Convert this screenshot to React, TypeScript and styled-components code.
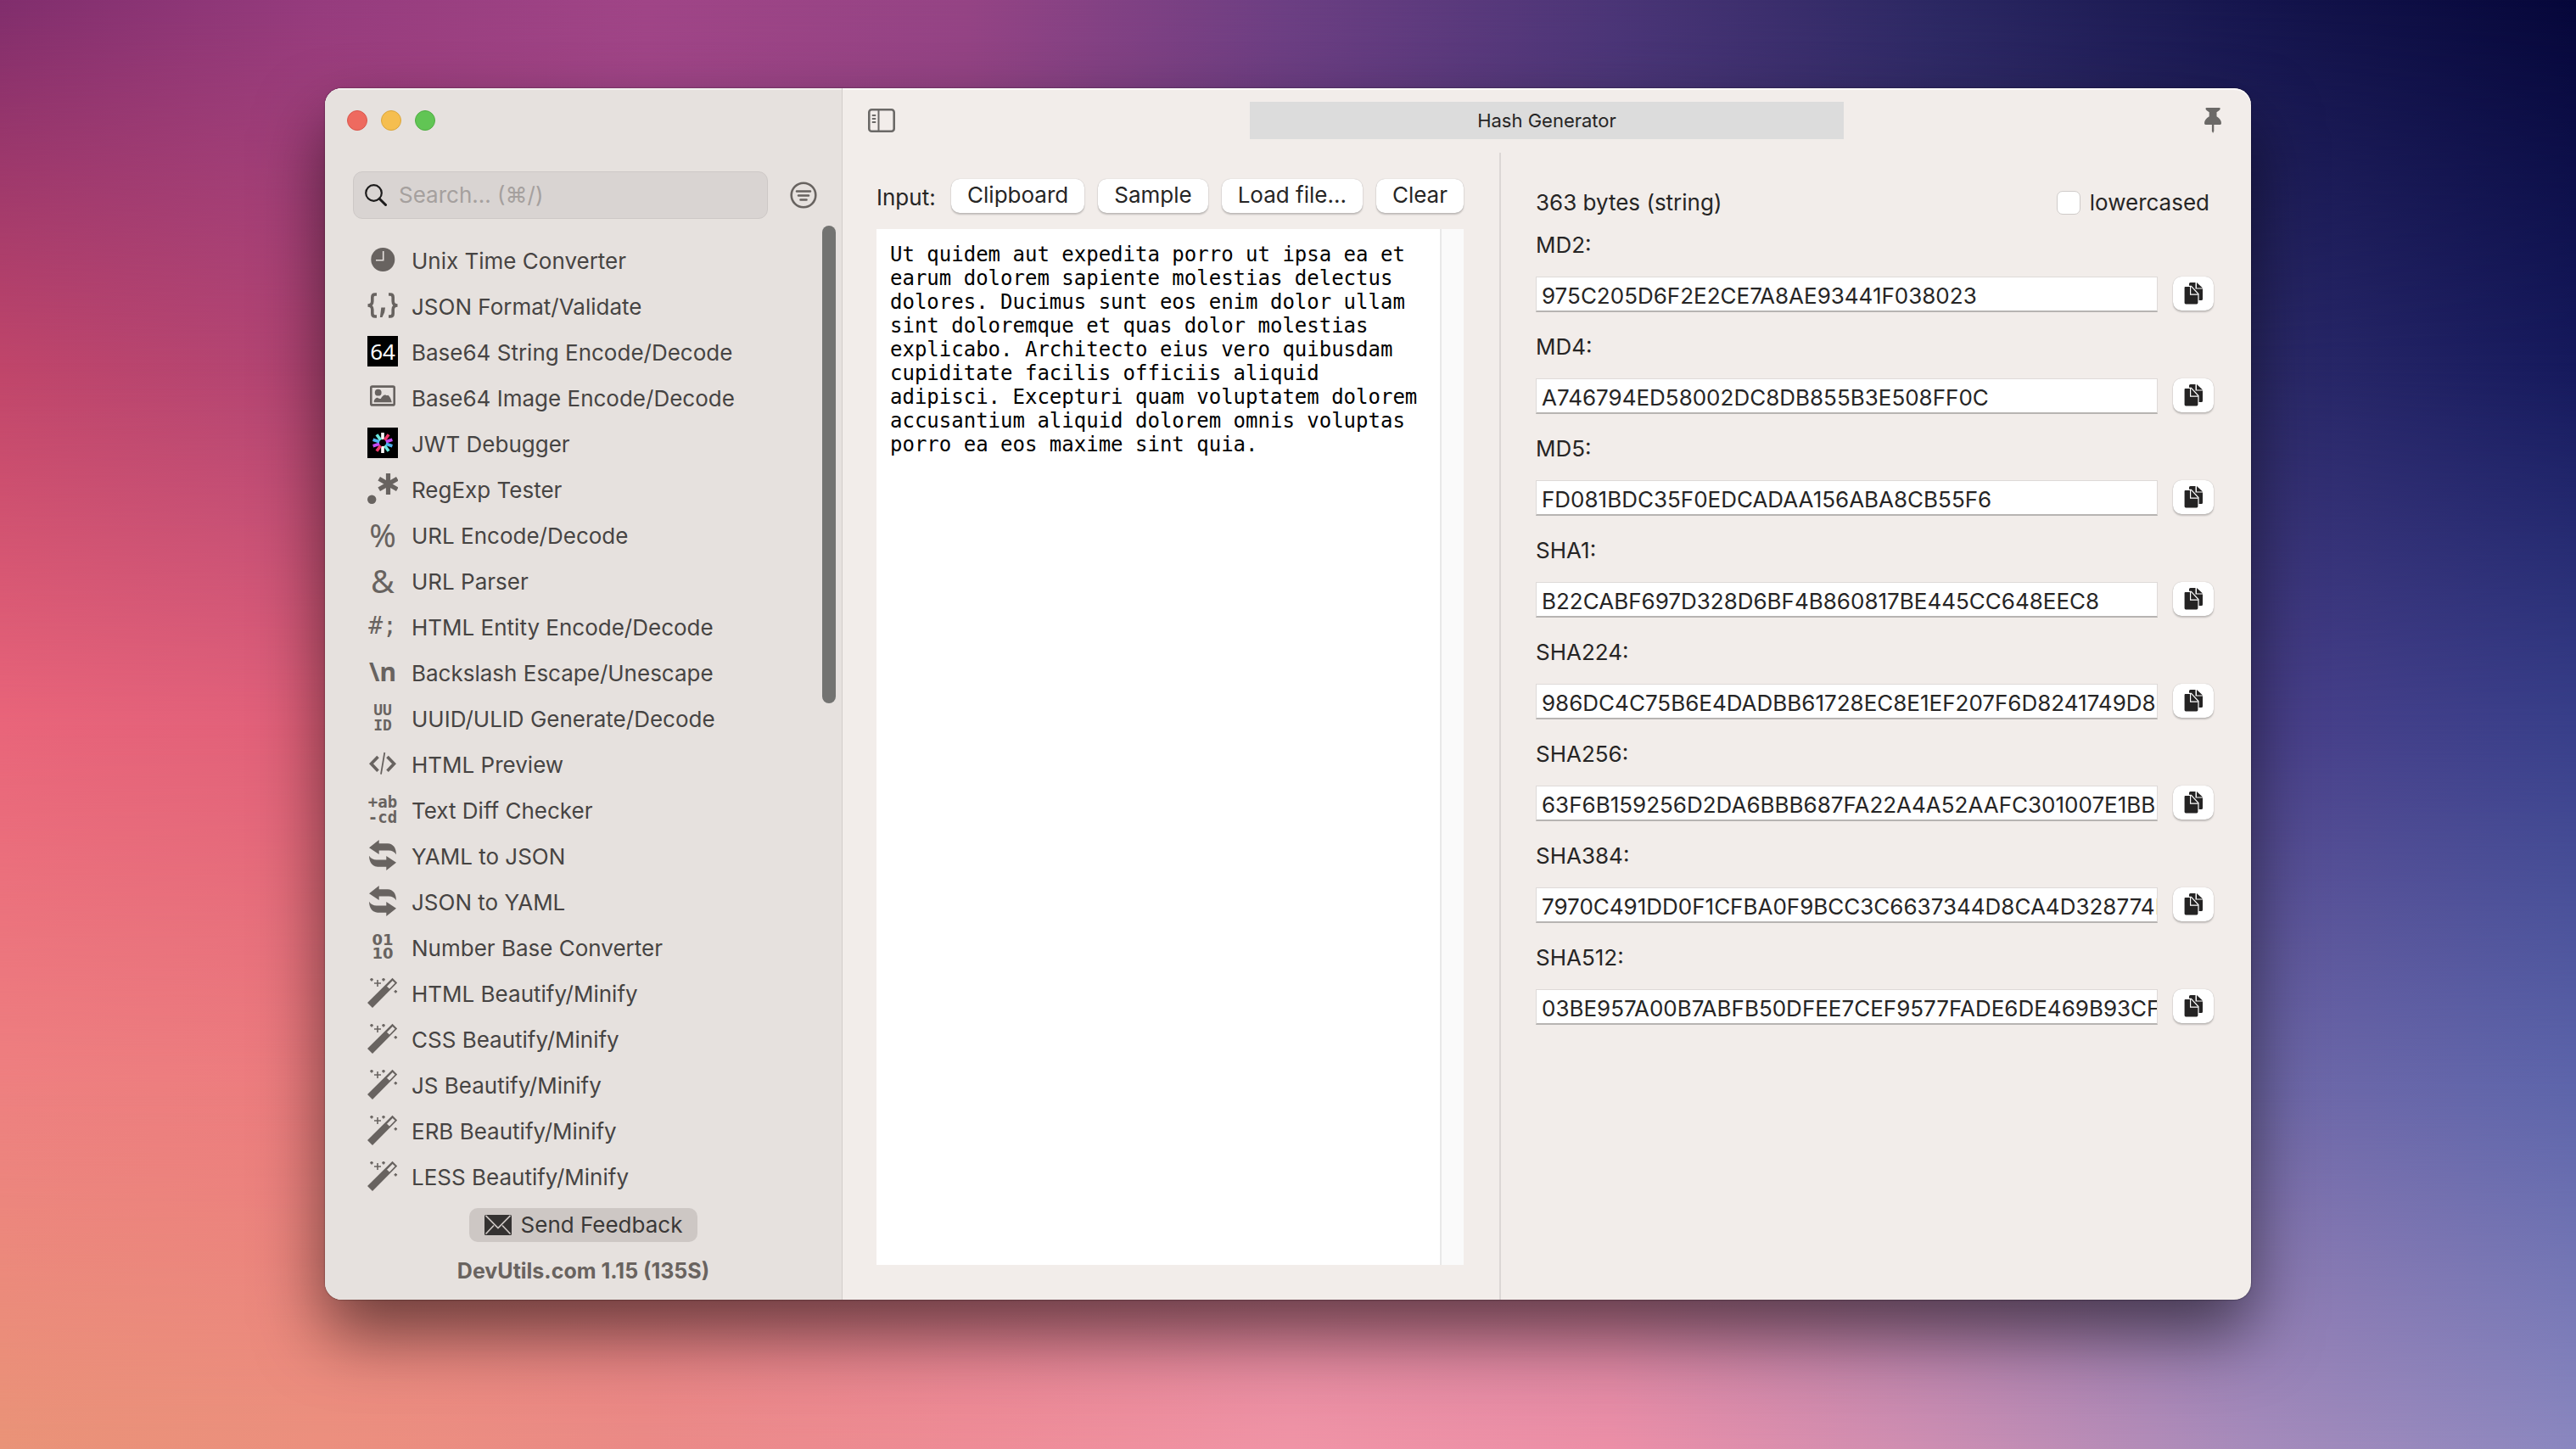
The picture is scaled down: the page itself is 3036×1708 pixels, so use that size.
import React from "react";
import styled, { createGlobalStyle } from "styled-components";

const ui = `Inter, "Liberation Sans", sans-serif`;
const mono = `"DejaVu Sans Mono", "Liberation Mono", monospace`;
const noto = `"Noto Sans", sans-serif`;

const Global = createGlobalStyle`
  *, *::before, *::after { box-sizing: border-box; }
  body { margin: 0; }
  button, input, textarea { font: inherit; color: inherit; margin: 0; }
  svg { display: block; flex: none; }
`;

/* ---------- wallpaper ---------- */

const Desktop = styled.div`
  position: relative;
  isolation: isolate;
  display: flex;
  min-height: 100vh;
  padding: 104px 383px 176px;
  font: 400 26px/32px ${ui};
  color: #262525;
  overflow: hidden;
`;

const Band = styled.div<{ $colors: string[]; $from: number; $to: number }>`
  position: absolute;
  inset: 0;
  z-index: -1;
  background: linear-gradient(to right, ${(p) => p.$colors.join(", ")});
  ${(p) =>
    p.$to > 0 &&
    `mask-image: linear-gradient(to bottom, transparent ${p.$from}%, #000 ${p.$to}%);`}
`;

const bands: { from: number; to: number; colors: string[] }[] = [
  { from: 0, to: 0, colors: ["#812e6d", "#963c7e", "#a04587", "#954485", "#6c3f83", "#4b3577", "#2c2863", "#15154d", "#06073a"] },
  { from: 0, to: 25, colors: ["#bf456a", "#b04474", "#a04587", "#8c407f", "#6c3b80", "#503a7c", "#403474", "#2c2a6a", "#15195c"] },
  { from: 25, to: 50, colors: ["#e9657a", "#e0607a", "#c05880", "#a05080", "#804c80", "#6a4880", "#584688", "#4a408a", "#383f8a"] },
  { from: 50, to: 75, colors: ["#ee8080", "#ec7c7e", "#e87884", "#d8748c", "#c87090", "#b07098", "#8c6ca0", "#7068a8", "#5d65ab"] },
  { from: 75, to: 100, colors: ["#e99377", "#eb907e", "#ea8a86", "#ee8c96", "#f094a6", "#ec8fa7", "#cd8eb2", "#a68bbb", "#8a87bf"] },
];

/* ---------- window ---------- */

const Window = styled.main`
  flex: 1;
  display: grid;
  grid-template-columns: 610px minmax(0, 1fr);
  border-radius: 20px;
  background: #f2edea;
  overflow: hidden;
  box-shadow: 0 0 2px rgba(0, 0, 0, 0.6), 0 40px 80px rgba(0, 0, 0, 0.55), inset 0 2px 0 #fbf9f8;
`;

const Sidebar = styled.aside`
  display: flex;
  flex-direction: column;
  padding-top: 26px;
  background: #e6e1de;
  border-right: 1px solid #d2cdca;
  box-shadow: inset 0 2px 0 #f3f0ee;
`;

const Lights = styled.div`
  display: flex;
  gap: 16px;
  padding-left: 26px;
`;

const Light = styled.button<{ $fill: string; $edge: string }>`
  width: 24px;
  height: 24px;
  padding: 0;
  border: 1px solid ${(p) => p.$edge};
  border-radius: 50%;
  background: ${(p) => p.$fill};
`;

const SearchRow = styled.div`
  display: flex;
  align-items: center;
  gap: 26px;
  padding: 48px 29px 0 33px;
`;

const SearchBox = styled.label`
  flex: 1;
  display: flex;
  align-items: center;
  gap: 14px;
  height: 56px;
  padding: 0 13px;
  border: 1px solid #cdc8c6;
  border-radius: 11px;
  background: #d9d4d2;
`;

const SearchInput = styled.input`
  flex: 1;
  min-width: 0;
  padding: 0;
  border: 0;
  outline: 0;
  background: transparent;
  &::placeholder { color: #a5a09e; opacity: 1; }
`;

const IconButton = styled.button`
  display: grid;
  place-items: center;
  justify-self: start;
  padding: 0;
  border: 0;
  background: transparent;
`;

const Scroller = styled.div`
  display: flex;
  justify-content: space-between;
  padding: 8px 7px 0 34px;
`;

const Tools = styled.ul`
  flex: 1;
  margin: 0;
  padding: 13px 0 0;
  list-style: none;
`;

const Tool = styled.button`
  display: flex;
  align-items: center;
  gap: 16px;
  width: 100%;
  height: 54px;
  padding: 0 16px;
  border: 0;
  background: transparent;
  color: #686360;
  text-align: left;
`;

const ToolName = styled.span`
  padding-top: 3px;
  color: #464443;
  white-space: nowrap;
`;

const Thumb = styled.div`
  width: 16px;
  height: 563px;
  border-radius: 8px;
  background: #737371;
`;

const Glyph = styled.span<{ $font: string; $size: number; $line: number; $bold?: boolean; $badge?: boolean }>`
  display: flex;
  flex: none;
  align-items: center;
  justify-content: center;
  width: 36px;
  height: 36px;
  font: ${(p) => (p.$bold ? 700 : 400)} ${(p) => p.$size}px/${(p) => p.$line}px ${(p) => p.$font};
  white-space: pre;
  ${(p) => p.$badge && "background: #000; color: #fff;"}
`;

const Footer = styled.footer`
  display: flex;
  flex-direction: column;
  align-items: center;
  gap: 18px;
  padding: 11px 0 18px;
`;

const Feedback = styled.button`
  display: flex;
  align-items: center;
  gap: 11px;
  height: 40px;
  padding: 0 18px;
  border: 0;
  border-radius: 10px;
  background: #cdc7c4;
  color: #3a3837;
`;

const Version = styled.strong`
  font-size: 25px;
  font-weight: 700;
  color: #69635f;
`;

/* ---------- content ---------- */

const Content = styled.section`
  display: flex;
  flex-direction: column;
  min-width: 0;
`;

const Toolbar = styled.header`
  display: grid;
  grid-template-columns: 1fr 700px 1fr;
  align-items: center;
  height: 76px;
  padding: 0 30px;
`;

const Title = styled.h1`
  margin: 0;
  font-size: 22px;
  font-weight: 400;
  line-height: 44px;
  text-align: center;
  background: #dcdcdc;
`;

const ToEnd = styled.div`
  display: flex;
  justify-content: flex-end;
  padding-right: 5px;
`;

const Panes = styled.div`
  flex: 1;
  display: grid;
  grid-template-columns: minmax(0, 774fr) minmax(0, 886fr);
`;

const InputPane = styled.div`
  display: flex;
  flex-direction: column;
  gap: 19px;
  padding: 31px 42px 41px 40px;
`;

const Actions = styled.div`
  display: flex;
  align-items: center;
  gap: 16px;
  height: 40px;
`;

const InputLabel = styled.label`
  flex: 1;
  padding-top: 4px;
`;

const Push = styled.button`
  display: grid;
  place-items: center;
  height: 40px;
  padding: 0 19px 2px;
  border: 0;
  border-radius: 10px;
  background: #fff;
  box-shadow: 0 0 1px rgba(0, 0, 0, 0.3), 0 2px 2px rgba(0, 0, 0, 0.2);
  white-space: nowrap;
`;

const CopyButton = styled(Push)`
  width: 48px;
  padding: 0;
`;

const Editor = styled.div`
  flex: 1;
  display: grid;
  grid-template-columns: minmax(0, 1fr) 28px;
  background: #fff;
`;

const Source = styled.textarea`
  width: 100%;
  padding: 16px;
  border: 0;
  outline: 0;
  resize: none;
  overflow: hidden;
  background: transparent;
  color: #000;
  font: 400 24px/28px ${mono};
`;

const Gutter = styled.div`
  border-left: 2px solid #e8e8e8;
  background: #fafafa;
`;

const HashPane = styled.div`
  padding: 41px 44px 0 41px;
  border-left: 2px solid #dcd7d5;
`;

const Summary = styled.div`
  display: flex;
  align-items: center;
  justify-content: space-between;
  height: 36px;
  padding-right: 5px;
`;

const Check = styled.label`
  display: flex;
  align-items: center;
  gap: 11px;
`;

const Tick = styled.input`
  appearance: none;
  width: 28px;
  height: 28px;
  border: 1px solid #cfcbc9;
  border-radius: 7px;
  background: #fff;
`;

const Hash = styled.div`
  display: flex;
  flex-direction: column;
  gap: 21px;
  height: 120px;
  padding-top: 16px;
`;

const HashLabel = styled.label`
  line-height: 32px;
`;

const HashRow = styled.div`
  display: flex;
  gap: 18px;
`;

const HashValue = styled.input`
  flex: 1;
  min-width: 0;
  height: 42px;
  padding: 4px 0 0 6px;
  border: 1px solid #dedad8;
  border-bottom: 2px solid #b7b4b2;
  outline: 0;
  background: #fff;
`;

/* ---------- drawings ---------- */

const ClockIcon = () => (
  <svg width="36" height="36" viewBox="0 0 36 36">
    <circle cx="18.3" cy="18" r="14" fill="currentColor" />
    <path d="M18.7 8v10.7H10" fill="none" stroke="#e6e1de" strokeWidth="1.6" />
  </svg>
);

const BracesIcon = () => (
  <svg width="36" height="36" viewBox="0 0 36 36" fill="none" stroke="currentColor" strokeWidth="3.6">
    <path d="M11 5H9Q5.8 5 5.8 8.5V13Q5.8 18 .5 18Q5.8 18 5.8 23V27.5Q5.8 31 9 31H11" />
    <path d="M25 5H27Q30.2 5 30.2 8.5V13Q30.2 18 35.5 18Q30.2 18 30.2 23V27.5Q30.2 31 27 31H25" />
    <path d="M16.3 20.5h4.7l-.8 5.5-2.7 6h-2.6z" fill="currentColor" stroke="none" />
  </svg>
);

const ImageIcon = () => (
  <svg width="36" height="36" viewBox="0 0 36 36" fill="currentColor">
    <rect x="4.3" y="5.6" width="27.4" height="21.8" rx="1.5" fill="none" stroke="currentColor" strokeWidth="2.6" />
    <circle cx="12.7" cy="12.7" r="3.9" />
    <path d="M7.7 24.3v-1.8q2-4.2 4.300-3.700 2 1.600 3.800 1.200 2.500-5 5.600-4.500 1.500 1.200 3 .2 3 2.300 4.400 8.600z" />
  </svg>
);

const spokes = ["#fff", "#f0386b", "#c44df5", "#4fb4f2", "#6be8e0", "#fff", "#f0386b", "#c44df5", "#4fb4f2", "#6be8e0"];

const JwtIcon = () => (
  <svg width="36" height="36" viewBox="0 0 36 36">
    <rect width="36" height="36" fill="#000" />
    {spokes.map((color, i) => (
      <rect key={i} x="16.2" y="6" width="3.6" height="8" fill={color} transform={`rotate(${i * 36} 18 18)`} />
    ))}
  </svg>
);

const RegExpIcon = () => (
  <svg width="36" height="36" viewBox="0 0 36 36" fill="currentColor">
    <circle cx="5.2" cy="30.7" r="5.2" />
    <path d="M24.5 0v25M13.7 6.3l21.6 12.5M35.3 6.3L13.7 18.8" stroke="currentColor" strokeWidth="5.2" />
  </svg>
);

const TagIcon = () => (
  <svg width="36" height="36" viewBox="0 0 36 36" fill="none" stroke="currentColor" strokeWidth="3.6">
    <path d="M12.5 10L4.5 18.3L12.5 26.7M23.5 10L31.5 18.3L23.5 26.7" />
    <path d="M20.3 5L16 30.7" strokeWidth="1.8" />
  </svg>
);

const swapArrow = "M2 9.3L13.7 0V4.3H24Q33.5 5 34 17.2Q31 12.4 25 12.4H13.7V17z";

const SwapIcon = () => (
  <svg width="36" height="36" viewBox="0 0 36 36" fill="currentColor">
    <path d={swapArrow} />
    <path d={swapArrow} transform="rotate(180 18 18)" />
  </svg>
);

const WandIcon = () => (
  <svg width="36" height="36" viewBox="0 0 36 36" fill="currentColor">
    <path fillRule="evenodd" d="M0 30L29.5 .8L35.2 6.5L6 36zM23 10.8L26 13.6L32.5 6.7L29.7 3.9z" />
    <path d="M12 3v8M8 7h8M5 1v3.6M3.2 2.6h3.6M19 1v3.6M17.2 2.6h3.6M33.3 15v3.6M31.5 16.7h3.6" stroke="currentColor" strokeWidth="1.6" />
  </svg>
);

const SearchIcon = () => (
  <svg width="26" height="26" viewBox="0 0 26 26" fill="none" stroke="#1d1c1c">
    <circle cx="10.5" cy="10.5" r="9.3" strokeWidth="2.2" />
    <path d="M17.2 17.2L24.500 24.500" strokeWidth="3" strokeLinecap="round" />
  </svg>
);

const FilterIcon = () => (
  <svg width="32" height="32" viewBox="0 0 32 32" fill="none" stroke="#686360" strokeWidth="2.6" strokeLinecap="round">
    <circle cx="16" cy="16" r="14.3" />
    <path d="M8 11.5h16M10 16.5h12M12.5 21.500h7" />
  </svg>
);

const SidebarIcon = () => (
  <svg width="32" height="28" viewBox="0 0 32 28" fill="none" stroke="#6b6967">
    <rect x="1.3" y="1.3" width="29.4" height="25.4" rx="3" strokeWidth="2.6" />
    <path d="M12.5 2v24" strokeWidth="2" />
    <path d="M4.8 8h4.400M4.800 12h4.400M4.800 16h4.400" strokeWidth="1.8" />
  </svg>
);

const PinIcon = () => (
  <svg width="20" height="30" viewBox="0 0 20 30" fill="#6b6967">
    <path d="M2.500 0h15.200q1 0 1 1.200 0 1.500-4.200 4v5q5.500 3.300 5.500 8 0 1.800-1.500 1.800h-17Q0 20 0 18.200q0-4.700 5.700-8v-5Q1.500 2.700 1.500 1.200 1.500 0 2.500 0z" />
    <path d="M8.900 20h2.400v7.500l-1.200 2.500-1.200-2.500z" />
  </svg>
);

const MailIcon = () => (
  <svg width="32" height="24" viewBox="0 0 32 24">
    <rect width="32" height="24" rx="1.5" fill="#343231" />
    <path d="M1.5 .8L16 15.5L30.5 .8M1.5 22.5L11 12.5M30.5 22.5L21 12.5" fill="none" stroke="#cdc7c4" strokeWidth="1.7" />
  </svg>
);

const CopyIcon = () => (
  <svg width="22" height="26" viewBox="0 0 22 26" fill="#242323">
    <path d="M7.500 0H13.500V7.500H22V19.500q0 1.500-1.500 1.500H8q-2 0-2-2V1.500Q6 0 7.500 0zM15 0L22 6.500H15z" />
    <path d="M1.500 4.300H8.500L17 13.500V24q0 2-2 2H2q-2 0-2-2V6q0-1.700 1.500-1.700z" stroke="#fff" strokeWidth="1.200" />
    <path d="M7.600 4.500V14.200h9.200" fill="none" stroke="#fff" strokeWidth="1.200" />
  </svg>
);

/* ---------- data ---------- */

const tools: [string, React.ReactNode][] = [
  ["Unix Time Converter", <ClockIcon />],
  ["JSON Format/Validate", <BracesIcon />],
  ["Base64 String Encode/Decode", <Glyph $font={noto} $size={26} $line={36} $badge>64</Glyph>],
  ["Base64 Image Encode/Decode", <ImageIcon />],
  ["JWT Debugger", <JwtIcon />],
  ["RegExp Tester", <RegExpIcon />],
  ["URL Encode/Decode", <Glyph $font={noto} $size={38} $line={36}>%</Glyph>],
  ["URL Parser", <Glyph $font={noto} $size={38} $line={36}>&amp;</Glyph>],
  ["HTML Entity Encode/Decode", <Glyph $font={mono} $size={28} $line={32}>#;</Glyph>],
  ["Backslash Escape/Unescape", <Glyph $font={noto} $size={30} $line={32} $bold>\n</Glyph>],
  ["UUID/ULID Generate/Decode", <Glyph $font={mono} $size={18} $line={18} $bold>{"UU\nID"}</Glyph>],
  ["HTML Preview", <TagIcon />],
  ["Text Diff Checker", <Glyph $font={mono} $size={19} $line={18} $bold>{"+ab\n-cd"}</Glyph>],
  ["YAML to JSON", <SwapIcon />],
  ["JSON to YAML", <SwapIcon />],
  ["Number Base Converter", <Glyph $font={`"DejaVu Sans", sans-serif`} $size={18} $line={16} $bold>{"01\n10"}</Glyph>],
  ["HTML Beautify/Minify", <WandIcon />],
  ["CSS Beautify/Minify", <WandIcon />],
  ["JS Beautify/Minify", <WandIcon />],
  ["ERB Beautify/Minify", <WandIcon />],
  ["LESS Beautify/Minify", <WandIcon />],
];

const hashes: [string, string][] = [
  ["MD2", "975C205D6F2E2CE7A8AE93441F038023"],
  ["MD4", "A746794ED58002DC8DB855B3E508FF0C"],
  ["MD5", "FD081BDC35F0EDCADAA156ABA8CB55F6"],
  ["SHA1", "B22CABF697D328D6BF4B860817BE445CC648EEC8"],
  ["SHA224", "986DC4C75B6E4DADBB61728EC8E1EF207F6D8241749D8"],
  ["SHA256", "63F6B159256D2DA6BBB687FA22A4A52AAFC301007E1BB"],
  ["SHA384", "7970C491DD0F1CFBA0F9BCC3C6637344D8CA4D328774E"],
  ["SHA512", "03BE957A00B7ABFB50DFEE7CEF9577FADE6DE469B93CF"],
];

const sourceText =
  "Ut quidem aut expedita porro ut ipsa ea et earum dolorem sapiente molestias delectus dolores. Ducimus sunt eos enim dolor ullam sint doloremque et quas dolor molestias explicabo. Architecto eius vero quibusdam cupiditate facilis officiis aliquid adipisci. Excepturi quam voluptatem dolorem accusantium aliquid dolorem omnis voluptas porro ea eos maxime sint quia.";

export default function App() {
  return (
    <Desktop>
      <Global />
      {bands.map((b) => (
        <Band key={b.to} $colors={b.colors} $from={b.from} $to={b.to} />
      ))}
      <Window>
        <Sidebar>
          <Lights>
            <Light aria-label="Close" $fill="#ee6a5f" $edge="#d9574d" />
            <Light aria-label="Minimize" $fill="#f5be4f" $edge="#dba63c" />
            <Light aria-label="Zoom" $fill="#61c554" $edge="#50ad44" />
          </Lights>
          <SearchRow>
            <SearchBox>
              <SearchIcon />
              <SearchInput type="text" aria-label="Search" placeholder="Search... (⌘/)" />
            </SearchBox>
            <IconButton aria-label="Filter"><FilterIcon /></IconButton>
          </SearchRow>
          <Scroller>
            <Tools>
              {tools.map(([name, icon]) => (
                <li key={name}>
                  <Tool>
                    {icon}
                    <ToolName>{name}</ToolName>
                  </Tool>
                </li>
              ))}
            </Tools>
            <Thumb />
          </Scroller>
          <Footer>
            <Feedback><MailIcon />Send Feedback</Feedback>
            <Version>DevUtils.com 1.15 (135S)</Version>
          </Footer>
        </Sidebar>
        <Content>
          <Toolbar>
            <IconButton aria-label="Toggle sidebar"><SidebarIcon /></IconButton>
            <Title>Hash Generator</Title>
            <ToEnd><IconButton aria-label="Pin window"><PinIcon /></IconButton></ToEnd>
          </Toolbar>
          <Panes>
            <InputPane>
              <Actions>
                <InputLabel htmlFor="source">Input:</InputLabel>
                <Push>Clipboard</Push>
                <Push>Sample</Push>
                <Push>Load file...</Push>
                <Push>Clear</Push>
              </Actions>
              <Editor>
                <Source id="source" spellCheck={false} defaultValue={sourceText} />
                <Gutter />
              </Editor>
            </InputPane>
            <HashPane>
              <Summary>
                <span>363 bytes (string)</span>
                <Check><Tick type="checkbox" />lowercased</Check>
              </Summary>
              {hashes.map(([name, value]) => (
                <Hash key={name}>
                  <HashLabel htmlFor={name}>{name}:</HashLabel>
                  <HashRow>
                    <HashValue id={name} readOnly value={value} />
                    <CopyButton aria-label={`Copy ${name}`}><CopyIcon /></CopyButton>
                  </HashRow>
                </Hash>
              ))}
            </HashPane>
          </Panes>
        </Content>
      </Window>
    </Desktop>
  );
}
